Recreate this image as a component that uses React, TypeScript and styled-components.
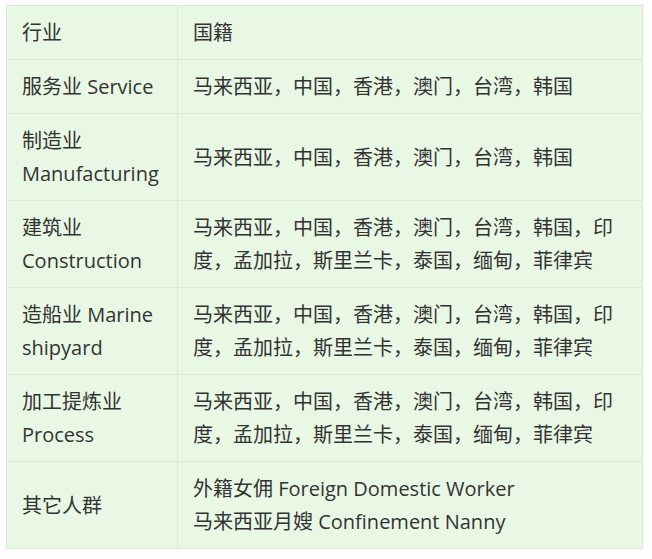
import React from "react";
import styled, { createGlobalStyle } from "styled-components";

const GlobalStyle = createGlobalStyle`
  body {
    margin: 0;
    background: #ffffff;
  }
`;

const Page = styled.div`
  padding: 5px 10px 10px 6px;
  font-family: "Open Sans", "Noto Sans CJK SC", sans-serif;
`;

const Table = styled.table`
  width: 637px;
  border-collapse: collapse;
  background: #e9f8e5;
  color: #333333;
  font-size: 20px;
  line-height: 33px;
`;

const Cell = styled.td<{ $first?: boolean }>`
  border: 1px solid #d9e9d5;
  padding: 10px 15px 10px ${(p) => (p.$first ? "15px" : "15px")};
  width: ${(p) => (p.$first ? "140px" : "auto")};
  vertical-align: middle;
  text-align: left;
`;

const Line = styled.div``;

type Row = { industry: string[]; countries: string[] };

const rows: Row[] = [
  { industry: ["行业"], countries: ["国籍"] },
  { industry: ["服务业 Service"], countries: ["马来西亚，中国，香港，澳门，台湾，韩国"] },
  { industry: ["制造业", "Manufacturing"], countries: ["马来西亚，中国，香港，澳门，台湾，韩国"] },
  {
    industry: ["建筑业", "Construction"],
    countries: ["马来西亚，中国，香港，澳门，台湾，韩国，印", "度，孟加拉，斯里兰卡，泰国，缅甸，菲律宾"],
  },
  {
    industry: ["造船业 Marine", "shipyard"],
    countries: ["马来西亚，中国，香港，澳门，台湾，韩国，印", "度，孟加拉，斯里兰卡，泰国，缅甸，菲律宾"],
  },
  {
    industry: ["加工提炼业", "Process"],
    countries: ["马来西亚，中国，香港，澳门，台湾，韩国，印", "度，孟加拉，斯里兰卡，泰国，缅甸，菲律宾"],
  },
  {
    industry: ["其它人群"],
    countries: ["外籍女佣 Foreign Domestic Worker", "马来西亚月嫂 Confinement Nanny"],
  },
];

export default function App() {
  return (
    <Page>
      <GlobalStyle />
      <Table>
        <tbody>
          {rows.map((r, i) => (
            <tr key={i}>
              <Cell $first>
                {r.industry.map((t) => (
                  <Line key={t}>{t}</Line>
                ))}
              </Cell>
              <Cell>
                {r.countries.map((t) => (
                  <Line key={t}>{t}</Line>
                ))}
              </Cell>
            </tr>
          ))}
        </tbody>
      </Table>
    </Page>
  );
}
